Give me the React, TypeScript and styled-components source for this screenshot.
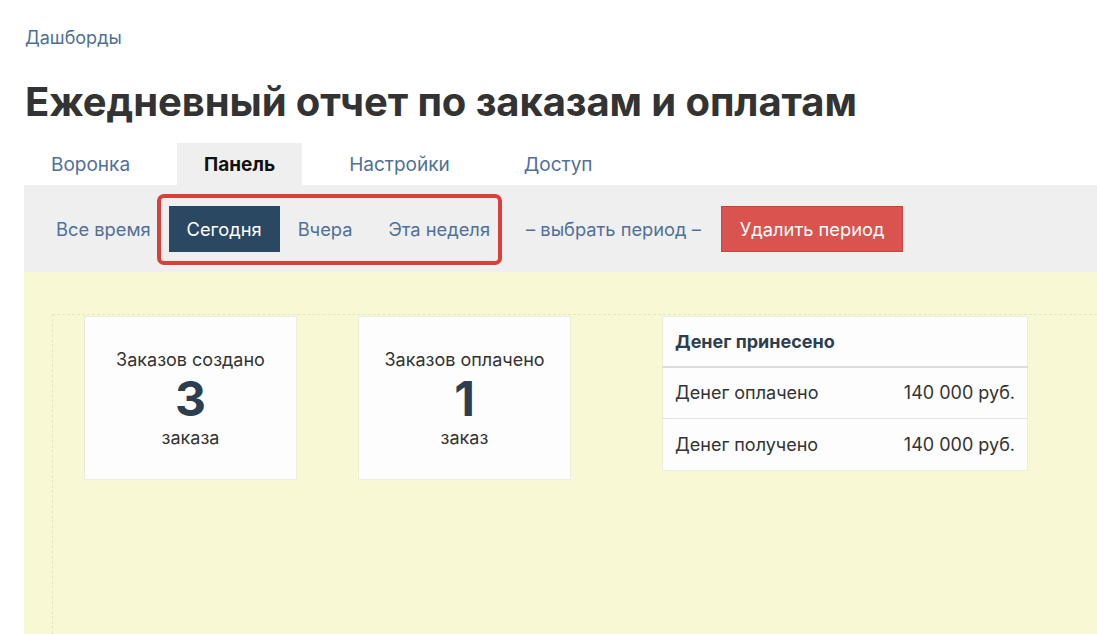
import styled, { createGlobalStyle } from 'styled-components';

const GlobalStyle = createGlobalStyle`
  html, body {
    margin: 0;
    padding: 0;
    background: #fff;
    font-family: Inter, "Noto Sans", "Liberation Sans", sans-serif;
    color: #333;
  }
  * {
    box-sizing: border-box;
  }
`;

const Page = styled.div`
  padding: 26px 0 0 24px;
  height: 634px;
  overflow: hidden;
  display: flex;
  flex-direction: column;
`;

const Crumb = styled.a`
  font-size: 18px;
  line-height: 24px;
  color: #4f7099;
  text-decoration: none;
  align-self: flex-start;
  margin-left: 1px;
`;

const Title = styled.h1`
  margin: 24px 0 0 1px;
  font-size: 40px;
  line-height: 56px;
  font-weight: 700;
  color: #333;
  letter-spacing: -0.1px;
`;

const Tabs = styled.div`
  display: flex;
  margin-top: 13px;
`;

const Tab = styled.div<{ $active?: boolean }>`
  height: 42px;
  padding: 0 27px;
  margin-right: 20px;
  display: flex;
  align-items: center;
  font-size: 19px;
  color: ${(p) => (p.$active ? '#111' : '#4f7099')};
  font-weight: ${(p) => (p.$active ? 700 : 400)};
  background: ${(p) => (p.$active ? '#efefef' : 'transparent')};
`;

const FilterBar = styled.div`
  background: #efefef;
  height: 87px;
  padding: 0 14px;
  display: flex;
  align-items: center;
`;

const PeriodButton = styled.div<{ $active?: boolean }>`
  height: 46px;
  padding: 0 18px;
  display: flex;
  align-items: center;
  font-size: 18.3px;
  color: ${(p) => (p.$active ? '#fff' : '#4f7099')};
  background: ${(p) => (p.$active ? '#2b4862' : 'transparent')};
`;

/* red frame drawn around the quick period buttons */
const Highlighted = styled.div`
  position: relative;
  display: flex;
  &::after {
    content: '';
    position: absolute;
    inset: -12px 6px -13px -12px;
    border: 4px solid #d8413a;
    border-radius: 7px;
    pointer-events: none;
  }
`;

const PickPeriod = styled.div`
  margin-left: 18px;
  font-size: 18.3px;
  color: #4f7099;
`;

const DangerButton = styled.div`
  margin-left: 20px;
  height: 46px;
  padding: 0 18px;
  display: flex;
  align-items: center;
  font-size: 18.3px;
  color: #fff;
  background: #d9534f;
  border: 1px solid #c9443f;
`;

const Board = styled.div`
  flex: 1;
  background: #f8f8d4;
  padding: 42px 0 0 28px;
  overflow: hidden;
`;

const Grid = styled.div`
  height: 100%;
  margin-right: -20px;
  border-top: 1px dashed #e6e6c4;
  border-left: 1px dashed #e6e6c4;
  padding: 1px 0 0 31px;
  display: flex;
  align-items: flex-start;
`;

const StatCard = styled.div`
  width: 213px;
  height: 164px;
  margin-right: 61px;
  background: #fdfdfd;
  border: 1px solid #ececdf;
  display: flex;
  flex-direction: column;
  align-items: center;
  padding-top: 30px;
`;

const StatLabel = styled.div`
  font-size: 18px;
  line-height: 26px;
  color: #333;
`;

const StatValue = styled.div`
  font-size: 48px;
  line-height: 52px;
  font-weight: 700;
  color: #2c3e50;
`;

const MoneyTable = styled.table`
  margin-left: 30px;
  width: 366px;
  background: #fdfdfd;
  border: 1px solid #ececdf;
  border-collapse: collapse;
  font-size: 18px;
  color: #333;

  th {
    text-align: left;
    font-weight: 700;
    color: #2c3e50;
    height: 50px;
    padding: 0 12px;
    border-bottom: 2px solid #dcdcdc;
  }

  td {
    height: 52px;
    padding: 0 12px;
    border-top: 1px solid #e2e2e2;
  }

  td + td {
    text-align: right;
  }
`;

const periods = ['Сегодня', 'Вчера', 'Эта неделя'];

const stats = [
  { label: 'Заказов создано', value: 3, unit: 'заказа' },
  { label: 'Заказов оплачено', value: 1, unit: 'заказ' },
];

const money = [
  { label: 'Денег оплачено', amount: '140 000 руб.' },
  { label: 'Денег получено', amount: '140 000 руб.' },
];

export default function App() {
  return (
    <>
      <GlobalStyle />
      <Page>
        <Crumb href="#">Дашборды</Crumb>
        <Title>Ежедневный отчет по заказам и оплатам</Title>
        <Tabs>
          <Tab>Воронка</Tab>
          <Tab $active>Панель</Tab>
          <Tab>Настройки</Tab>
          <Tab>Доступ</Tab>
        </Tabs>
        <FilterBar>
          <PeriodButton>Все время</PeriodButton>
          <Highlighted>
            {periods.map((p, i) => (
              <PeriodButton key={p} $active={i === 0}>
                {p}
              </PeriodButton>
            ))}
          </Highlighted>
          <PickPeriod>– выбрать период –</PickPeriod>
          <DangerButton>Удалить период</DangerButton>
        </FilterBar>
        <Board>
          <Grid>
            {stats.map((s) => (
              <StatCard key={s.label}>
                <StatLabel>{s.label}</StatLabel>
                <StatValue>{s.value}</StatValue>
                <StatLabel>{s.unit}</StatLabel>
              </StatCard>
            ))}
            <MoneyTable>
              <thead>
                <tr>
                  <th colSpan={2}>Денег принесено</th>
                </tr>
              </thead>
              <tbody>
                {money.map((m) => (
                  <tr key={m.label}>
                    <td>{m.label}</td>
                    <td>{m.amount}</td>
                  </tr>
                ))}
              </tbody>
            </MoneyTable>
          </Grid>
        </Board>
      </Page>
    </>
  );
}
